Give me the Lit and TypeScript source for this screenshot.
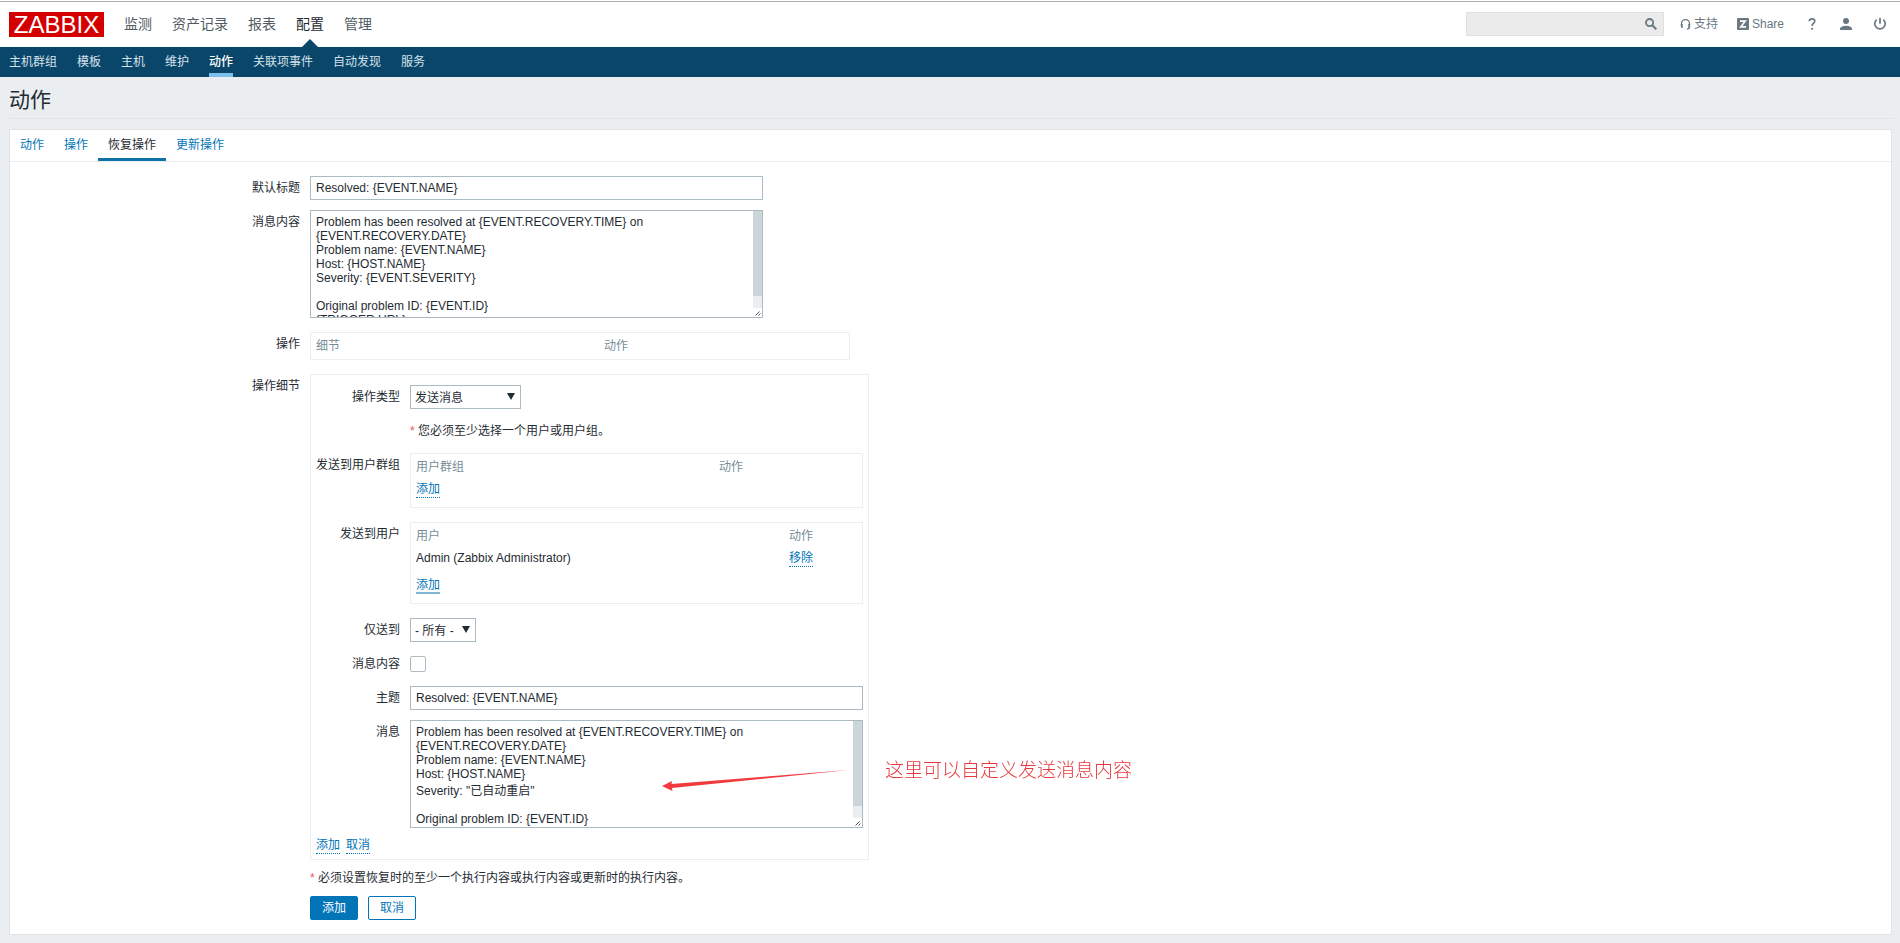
import { LitElement, html, css, svg } from "lit";
import { customElement, state } from "lit/decorators.js";

const MAIN_MENU = ["监测", "资产记录", "报表", "配置", "管理"];
const SUB_MENU = ["主机群组", "模板", "主机", "维护", "动作", "关联项事件", "自动发现", "服务"];
const TABS = ["动作", "操作", "恢复操作", "更新操作"];

const messageText = (severity: string) => `Problem has been resolved at {EVENT.RECOVERY.TIME} on {EVENT.RECOVERY.DATE}
Problem name: {EVENT.NAME}
Host: {HOST.NAME}
Severity: ${severity}

Original problem ID: {EVENT.ID}
{TRIGGER.URL}`;

const searchIcon = svg`<svg class="icon" width="12" height="12" viewBox="0 0 12 12" aria-hidden="true">
  <circle cx="4.6" cy="4.6" r="3.6" fill="none" stroke="currentColor" stroke-width="1.8"/>
  <path d="M7.3 7.3 11.3 11.3" stroke="currentColor" stroke-width="2"/></svg>`;
const supportIcon = svg`<svg class="icon" width="11" height="13" viewBox="0 0 12 13" aria-hidden="true">
  <path d="M1.6 7V5.6a4.4 4.4 0 0 1 8.8 0V7M10.4 9.500Q10.400 11.500 7.500 11.600" fill="none" stroke="currentColor" stroke-width="1.4"/>
  <path d="M.9 6H3v4.200H2.200Q.9 9.900.9 8.600ZM11.100 6H9v4.200H9.800Q11.100 9.900 11.100 8.600Z" fill="currentColor"/></svg>`;
const shareIcon = svg`<svg class="icon" width="12" height="12" viewBox="0 0 12 12" aria-hidden="true">
  <rect width="12" height="12" rx="1" fill="currentColor"/>
  <path d="M3 3.200H8.200L3.800 8.800H9" fill="none" stroke="#fff" stroke-width="1.700"/></svg>`;
const helpIcon = svg`<svg class="icon" width="8" height="12" viewBox="0 0 8 12" aria-hidden="true">
  <path d="M1.200 3.200Q1.300.9 4 .9 6.800.9 6.800 3.200 6.800 4.500 5.300 5.500 4.100 6.300 4.100 8" fill="none" stroke="currentColor" stroke-width="1.600"/>
  <rect x="3.200" y="9.800" width="1.800" height="1.900" fill="currentColor"/></svg>`;
const userIcon = svg`<svg class="icon" width="12" height="12" viewBox="0 0 12 12" aria-hidden="true">
  <circle cx="6" cy="3" r="3" fill="currentColor"/>
  <path d="M0 12V10.400Q.4 8.200 6 7.700Q11.600 8.200 12 10.400V12Z" fill="currentColor"/></svg>`;
const powerIcon = svg`<svg class="icon" width="14" height="14" viewBox="0 0 14 14" aria-hidden="true">
  <path d="M7 .8V6.800" stroke="currentColor" stroke-width="1.700"/>
  <path d="M3.700 2.700A5.200 5.200 0 1 0 10.300 2.700" fill="none" stroke="currentColor" stroke-width="1.700"/></svg>`;
const scrollbar = html`<span class="bar" aria-hidden="true">
  <svg class="grip" width="9" height="9" viewBox="0 0 9 9"><path d="M2.500 7.500 6.500 3.500M5.500 7.500 7.500 5.500" stroke="#555" stroke-width="1"/></svg>
</span>`;

@customElement("app-root")
export class AppRoot extends LitElement {
  @state() private tab = "恢复操作";

  static styles = css`
    :host {
      display: block;
      min-height: 100vh;
      background: #ebeef0;
      color: #1f2c33;
      font: 12px/16px "Liberation Sans", "Noto Sans CJK SC", sans-serif;
    }
    * { box-sizing: border-box; }
    a { color: #0275b8; text-decoration: none; }

    .top {
      height: 47px;
      padding-top: 1px;
      background: #fff;
    }
    .top-row {
      display: flex;
      align-items: center;
      height: 46px;
      padding: 0 13px 1px 9px;
      border-top: 1px solid #acacac;
    }
    .logo {
      width: 95px;
      background: #d40000;
      color: #fff;
      font-size: 24px;
      line-height: 25px;
      text-align: center;
    }
    .menu, .submenu, .tabs { display: flex; margin: 0; padding: 0; list-style: none; }
    .menu { gap: 20px; margin-left: 20px; font-size: 14px; align-self: stretch; }
    .menu li { display: flex; align-items: center; }
    .menu a { color: #4f5b62; }
    .menu .current { color: #1f2c33; }
    .menu .on { position: relative; }
    .menu .on::after {
      content: "";
      position: absolute;
      bottom: -1px;
      left: 50%;
      margin-left: -8px;
      border: 8px solid transparent;
      border-top: 0;
      border-bottom-color: #0a466a;
    }
    .tools { display: flex; align-items: center; margin-left: auto; color: #6a7882; }
    .tools a { display: flex; align-items: center; gap: 3px; color: #6a7882; }
    .icon { display: block; flex: none; }
    .search {
      display: flex;
      align-items: center;
      width: 198px;
      height: 24px;
      padding-right: 6px;
      margin-right: 16px;
      background: #ebebeb;
      border: 1px solid #e0e0e0;
    }
    .search input { flex: 1; min-width: 0; border: 0; background: none; outline: 0; font: inherit; }
    .search button { padding: 0; border: 0; background: none; color: inherit; }
    .support { margin-right: 19px; }
    .share { margin-right: 24px; }
    .help { margin-right: 24px; }
    .user { margin-right: 21px; }

    .submenu { gap: 20px; height: 30px; padding: 0 9px; background: #0a466a; }
    .submenu a { display: block; height: 30px; line-height: 31px; color: #d5e2ea; }
    .submenu .current { color: #fff; font-weight: 500; border-bottom: 4px solid #7bbfea; }

    .title {
      margin: 0 6px 0 9px;
      padding: 11px 0 6px;
      border-bottom: 1px solid #dfe4e7;
      font-size: 21px;
      line-height: 24px;
      font-weight: 400;
    }
    .panel { margin: 10px 8px 0 9px; padding-bottom: 14px; background: #fff; border: 1px solid #dfe4e7; }
    .tabs { border-bottom: 1px solid #ebeef0; }
    .tabs a { display: block; height: 31px; padding: 0 10px; line-height: 31px; }
    .tabs .current { color: #1f2c33; border-bottom: 3px solid #0f72a8; }

    .form { display: grid; grid-template-columns: 280px minmax(0, 1fr); gap: 10px; padding: 14px 10px 0; }
    .label { text-align: right; line-height: 24px; white-space: nowrap; }
    .wide { grid-column: 2; }
    .text {
      display: block;
      width: 453px;
      max-width: 100%;
      height: 24px;
      margin: 0;
      padding: 0 5px;
      border: 1px solid #acbbc2;
      border-radius: 0;
      background: #fff;
      color: inherit;
      font: inherit;
      outline: 0;
    }
    textarea.text { height: 108px; padding: 4px 14px 4px 5px; line-height: normal; resize: none; overflow-y: scroll; scrollbar-width: none; }
    .area { position: relative; width: 453px; max-width: 100%; }
    .bar {
      position: absolute;
      top: 1px;
      right: 1px;
      bottom: 1px;
      width: 9px;
      background: linear-gradient(#ccd5d9 80%, #ebeef0 80%);
      pointer-events: none;
    }
    .grip { position: absolute; right: 0; bottom: 0; background: #fff; }
    .box { width: 559px; padding: 10px 5px 5px; border: 1px solid #ebeef0; }
    .inner { display: grid; grid-template-columns: 84px minmax(0, 1fr); gap: 10px; }
    .links { display: flex; gap: 6px; margin-top: 10px; }

    .grid { width: 100%; margin: 4px 0; border: 1px solid #ebeef0; border-collapse: separate; border-spacing: 0; table-layout: fixed; }
    .grid.ops { width: 540px; }
    .grid.groups { margin-bottom: 0; }
    .grid-label { margin-top: 4px; }
    .grid th { padding: 0 5px; text-align: left; font-weight: 400; line-height: 26px; color: #768d99; }
    .grid td { padding: 0 5px 9px; line-height: 18px; vertical-align: top; }
    .c-ops { width: 288px; }
    .c-group { width: 303px; }
    .c-user { width: 373px; }
    .dotted { display: inline-block; line-height: 15px; border-bottom: 1px dotted #0275b8; }
    .dotted.focus { line-height: 14px; border-bottom: 2px solid #7fb9d6; }

    .pick { position: relative; display: inline-block; vertical-align: top; }
    .pick::after {
      content: "";
      position: absolute;
      top: 8px;
      right: 6px;
      border: 4px solid transparent;
      border-top: 7px solid #1f2c33;
      border-bottom: 0;
      pointer-events: none;
    }
    .pick select {
      display: block;
      height: 24px;
      padding: 2px 4px 0;
      appearance: none;
      border: 1px solid #acbbc2;
      border-radius: 0;
      background: #fff;
      color: inherit;
      font: inherit;
      outline: 0;
    }
    .type { width: 111px; }
    .media { width: 66px; }
    .check {
      display: block;
      width: 16px;
      height: 16px;
      margin: 4px 0;
      appearance: none;
      border: 1px solid #acbbc2;
      border-radius: 2px;
      background: #fff;
    }
    .note { margin: 0; height: 20px; line-height: 24px; }
    .note.low { height: 16px; line-height: 16px; }
    .star { color: #e45959; }
    .arrow { position: absolute; left: 251px; top: 48px; pointer-events: none; }
    .remark {
      position: absolute;
      left: 475px;
      top: 37px;
      color: #e8383d;
      font: 300 19px/24px "Noto Sans CJK SC", sans-serif;
      white-space: nowrap;
    }
    .actions { display: flex; gap: 10px; }
    .btn {
      width: 48px;
      height: 24px;
      padding: 0;
      border: 1px solid #0275b8;
      border-radius: 2px;
      background: #0275b8;
      color: #fff;
      font: inherit;
    }
    .btn.alt { background: #fff; color: #0275b8; }
  `;

  private pickTab(e: Event, name: string) {
    e.preventDefault();
    this.tab = name;
  }

  render() {
    return html`
      <header class="top">
        <div class="top-row">
          <a class="logo" href="#">ZABBIX</a>
          <ul class="menu">
            ${MAIN_MENU.map((m) => html`<li class=${m === "配置" ? "on" : ""}><a class=${m === "配置" ? "current" : ""} href="#">${m}</a></li>`)}
          </ul>
          <div class="tools">
            <form class="search" role="search">
              <input type="text" aria-label="搜索" />
              <button type="button" aria-label="搜索">${searchIcon}</button>
            </form>
            <a class="support" href="#">${supportIcon}<span>支持</span></a>
            <a class="share" href="#">${shareIcon}<span>Share</span></a>
            <a class="help" href="#" aria-label="帮助">${helpIcon}</a>
            <a class="user" href="#" aria-label="用户">${userIcon}</a>
            <a href="#" aria-label="退出">${powerIcon}</a>
          </div>
        </div>
      </header>
      <nav>
        <ul class="submenu">
          ${SUB_MENU.map((m) => html`<li><a class=${m === "动作" ? "current" : ""} href="#">${m}</a></li>`)}
        </ul>
      </nav>
      <h1 class="title">动作</h1>
      <main class="panel">
        <ul class="tabs">
          ${TABS.map((t) => html`<li><a class=${t === this.tab ? "current" : ""} href="#" @click=${(e: Event) => this.pickTab(e, t)}>${t}</a></li>`)}
        </ul>
        <div class="form">
          <label class="label" for="subject">默认标题</label>
          <input class="text" id="subject" type="text" value="Resolved: {EVENT.NAME}" />

          <label class="label" for="body">消息内容</label>
          <div class="area">
            <textarea class="text" id="body" spellcheck="false" .value=${messageText("{EVENT.SEVERITY}")}></textarea>
            ${scrollbar}
          </div>

          <span class="label grid-label">操作</span>
          <table class="grid ops">
            <colgroup><col class="c-ops" /><col /></colgroup>
            <thead><tr><th>细节</th><th>动作</th></tr></thead>
          </table>

          <span class="label">操作细节</span>
          <section class="box">
            <div class="inner">
              <label class="label" for="type">操作类型</label>
              <div><span class="pick"><select class="type" id="type"><option>发送消息</option></select></span></div>

              <p class="note wide"><span class="star">*</span> 您必须至少选择一个用户或用户组。</p>

              <span class="label grid-label">发送到用户群组</span>
              <table class="grid groups">
                <colgroup><col class="c-group" /><col /></colgroup>
                <thead><tr><th>用户群组</th><th>动作</th></tr></thead>
                <tbody><tr><td colspan="2"><a class="dotted" href="#">添加</a></td></tr></tbody>
              </table>

              <span class="label grid-label">发送到用户</span>
              <table class="grid">
                <colgroup><col class="c-user" /><col /></colgroup>
                <thead><tr><th>用户</th><th>动作</th></tr></thead>
                <tbody>
                  <tr><td>Admin (Zabbix Administrator)</td><td><a class="dotted" href="#">移除</a></td></tr>
                  <tr><td colspan="2"><a class="dotted focus" href="#">添加</a></td></tr>
                </tbody>
              </table>

              <label class="label" for="media">仅送到</label>
              <div><span class="pick"><select class="media" id="media"><option>- 所有 -</option></select></span></div>

              <label class="label" for="default">消息内容</label>
              <input class="check" id="default" type="checkbox" />

              <label class="label" for="op-subject">主题</label>
              <input class="text" id="op-subject" type="text" value="Resolved: {EVENT.NAME}" />

              <label class="label" for="op-body">消息</label>
              <div class="area">
                <textarea class="text" id="op-body" spellcheck="false" .value=${messageText('"已自动重启"')}></textarea>
                ${scrollbar}
                <svg class="arrow" width="190" height="26" viewBox="0 0 190 26" aria-hidden="true">
                  <path d="M1 18 11 13 10.500 16 188 2 11 20 11.500 23Z" fill="#f03a3e" />
                </svg>
                <span class="remark">这里可以自定义发送消息内容</span>
              </div>
            </div>
            <div class="links"><a class="dotted" href="#">添加</a><a class="dotted" href="#">取消</a></div>
          </section>

          <p class="note low wide"><span class="star">*</span> 必须设置恢复时的至少一个执行内容或执行内容或更新时的执行内容。</p>
          <div class="actions wide">
            <button class="btn" type="button">添加</button>
            <button class="btn alt" type="button">取消</button>
          </div>
        </div>
      </main>
    `;
  }
}
